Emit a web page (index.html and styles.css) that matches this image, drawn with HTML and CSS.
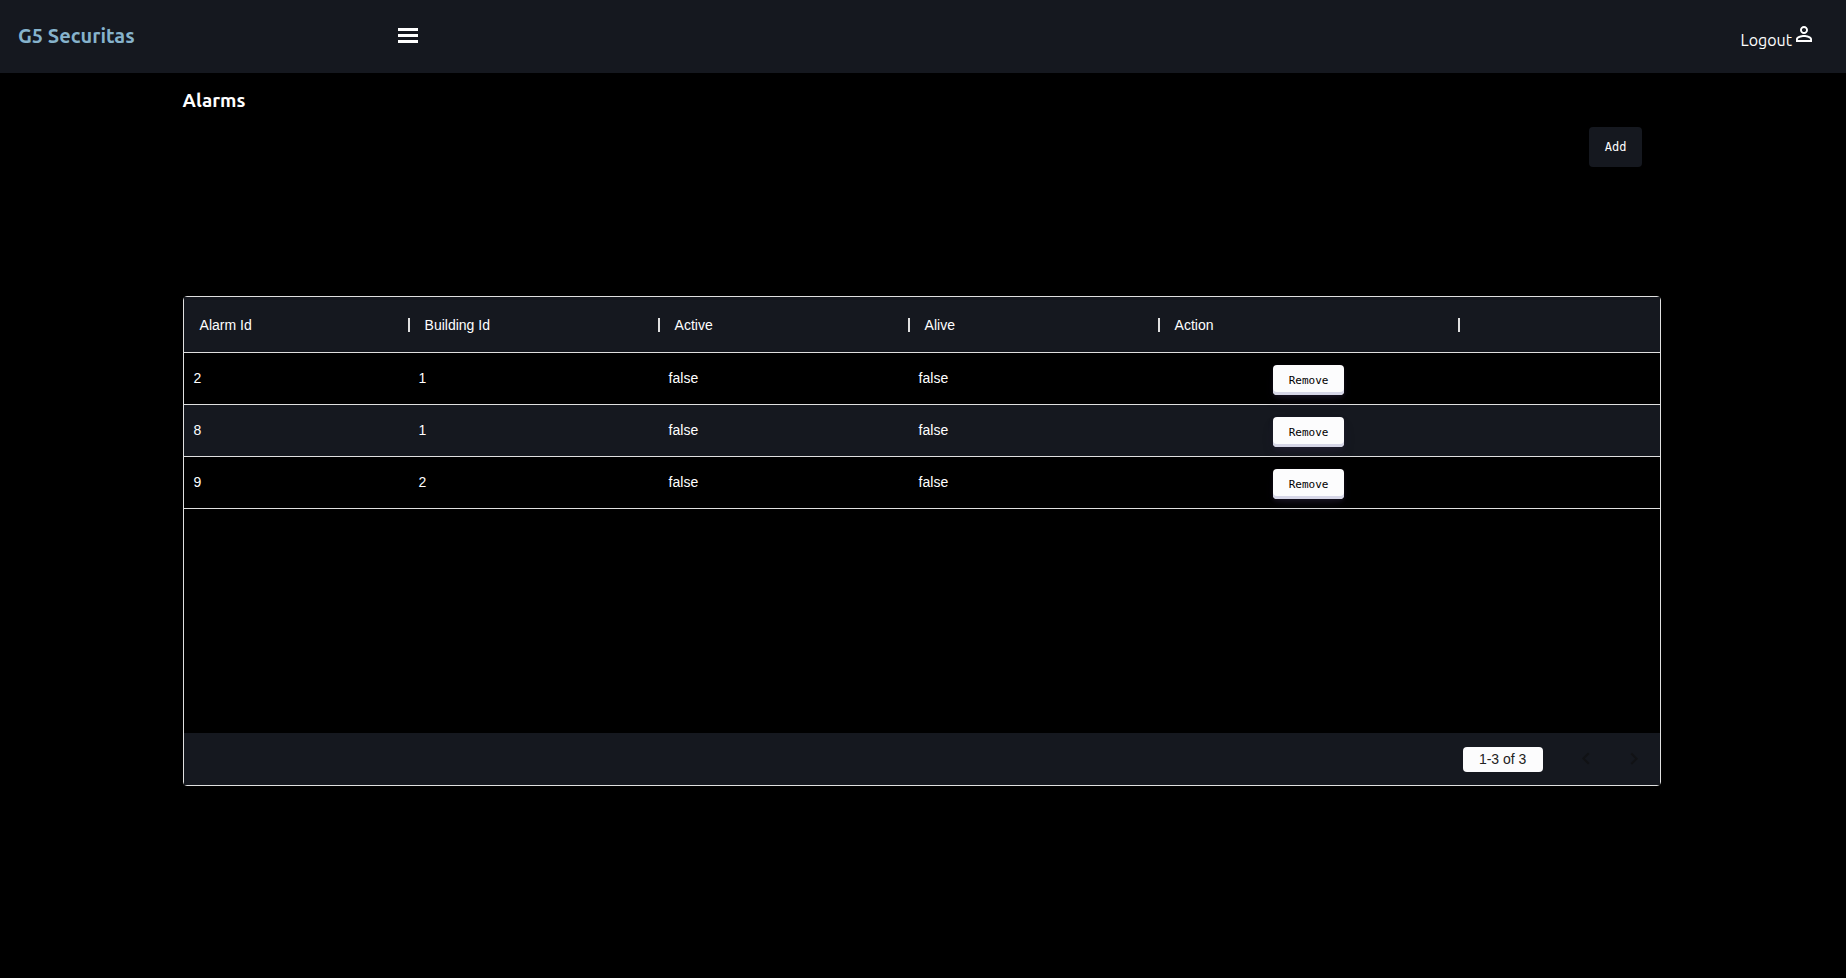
FILE: index.html
```html
<!DOCTYPE html>
<html lang="en">
<head>
<meta charset="utf-8">
<title>G5 Securitas</title>
<link rel="stylesheet" href="styles.css">
</head>
<body>
<header class="topbar">
  <div class="topbar-start">
    <a class="brand" href="#">G5 Securitas</a>
    <button class="menu-button" type="button" aria-label="Menu">
      <svg width="20" height="15" viewBox="0 0 20 15" fill="currentColor"><path d="M0 0h20v3H0zM0 6h20v3H0zM0 12h20v3H0z"/></svg>
    </button>
  </div>
  <a class="logout" href="#"><span>Logout</span>
    <svg class="logout-icon" width="24" height="24" viewBox="0 0 24 24" fill="currentColor"><path d="M12 5.9c1.16 0 2.1.94 2.1 2.1s-.94 2.1-2.1 2.1S9.900 9.160 9.900 8s.94-2.1 2.100-2.100m0 9c2.970 0 6.100 1.460 6.100 2.100v1.100H5.900V17c0-.64 3.130-2.100 6.100-2.100M12 4C9.790 4 8 5.790 8 8s1.790 4 4 4 4-1.790 4-4-1.790-4-4-4m0 9c-2.670 0-8 1.340-8 4v3h16v-3c0-2.660-5.330-4-8-4"/></svg>
  </a>
</header>
<main class="page">
  <h1 class="page-title">Alarms</h1>
  <div class="actions"><button class="add-button" type="button">Add</button></div>
  <section class="grid" aria-label="Alarms">
    <div class="grid-body">
      <table class="alarms">
        <colgroup><col class="col-id"><col class="col-data"><col class="col-data"><col class="col-data"><col class="col-action"><col></colgroup>
        <thead>
          <tr><th>Alarm Id</th><th>Building Id</th><th>Active</th><th>Alive</th><th>Action</th><td class="filler"></td></tr>
        </thead>
        <tbody>
          <tr><td>2</td><td>1</td><td>false</td><td>false</td><td class="action-cell"><button class="remove-button" type="button">Remove</button></td><td></td></tr>
          <tr><td>8</td><td>1</td><td>false</td><td>false</td><td class="action-cell"><button class="remove-button" type="button">Remove</button></td><td></td></tr>
          <tr><td>9</td><td>2</td><td>false</td><td>false</td><td class="action-cell"><button class="remove-button" type="button">Remove</button></td><td></td></tr>
        </tbody>
      </table>
    </div>
    <footer class="grid-footer">
      <p class="range">1-3 of 3</p>
      <div class="pager">
        <button class="page-button" type="button" disabled aria-label="Previous page"><svg width="24" height="24" viewBox="0 0 24 24" fill="currentColor"><path d="M15.41 16.09l-4.580-4.590 4.580-4.590L14 5.500l-6 6 6 6z"/></svg></button>
        <button class="page-button" type="button" disabled aria-label="Next page"><svg width="24" height="24" viewBox="0 0 24 24" fill="currentColor"><path d="M8.590 16.340l4.580-4.590-4.580-4.590L10 5.750l6 6-6 6z"/></svg></button>
      </div>
    </footer>
  </section>
</main>
</body>
</html>
```
FILE: styles.css
```css
* {
  box-sizing: border-box;
}

body {
  margin: 0;
  background: #000;
  color: #fff;
  font-family: "Ubuntu", "Noto Sans", sans-serif;
}

.topbar {
  display: flex;
  align-items: center;
  justify-content: space-between;
  height: 73px;
  padding: 0 30px 0 18px;
  background: #15181f;
}

.topbar-start {
  display: flex;
  align-items: center;
  padding-bottom: 2px;
}

.brand {
  width: 380px;
  color: #86b3cc;
  font-size: 20px;
  font-weight: 700;
  line-height: 24px;
  text-decoration: none;
}

.menu-button {
  display: flex;
  padding: 0;
  border: 0;
  background: none;
  color: #fff;
}

.logout {
  display: flex;
  align-items: flex-start;
  color: #fff;
  font-size: 16px;
  line-height: 24px;
  text-decoration: none;
}

.logout span {
  padding-top: 6px;
}

.page {
  width: calc(80% + 2px);
  margin-left: calc(10% - 2px);
  padding-top: 15px;
}

.page-title {
  margin: 0;
  font-size: 19px;
  font-weight: 700;
  line-height: 24px;
}

.actions {
  display: flex;
  justify-content: flex-end;
  padding: 15px 19px 129px 0;
}

.add-button {
  height: 40px;
  padding: 0 16px;
  border: 0;
  border-radius: 4px;
  background: #15181f;
  color: #fcfcfd;
  font: 12px "DejaVu Sans Mono", monospace;
}

.grid {
  display: flex;
  flex-direction: column;
  min-height: 490px;
  border: 1px solid #e0e0e0;
  border-radius: 4px;
  font-family: "Liberation Sans", Arial, sans-serif;
  font-size: 14px;
  line-height: 20px;
}

.grid-body {
  flex: 1;
}

.alarms {
  width: 100%;
  border-spacing: 0;
  table-layout: fixed;
}

.col-id {
  width: 225px;
}

.col-data {
  width: 250px;
}

.col-action {
  width: 300px;
}

.alarms th,
.alarms td {
  height: 52px;
  padding: 0 10px 2px;
  border-bottom: 1px solid #e0e0e0;
  text-align: left;
}

.alarms th,
.alarms .filler {
  position: relative;
  height: 56px;
  padding: 0 16px;
  background: #15181f;
  font-weight: 400;
}

.alarms th::after {
  position: absolute;
  top: 21px;
  right: -1px;
  z-index: 1;
  width: 2px;
  height: 14px;
  background: #e0e0e0;
  content: "";
}

.alarms tbody tr:nth-child(even) {
  background: #15181f;
}

.alarms .action-cell {
  padding-top: 3px;
  padding-bottom: 0;
  text-align: center;
}

.remove-button {
  height: 30px;
  padding: 0 16px;
  border: 0;
  border-radius: 4px;
  background: #fcfcfd;
  box-shadow: rgba(45, 35, 66, 0.4) 0 2px 4px, rgba(45, 35, 66, 0.3) 0 7px 13px -3px, #d6d6e7 0 -3px 0 inset;
  color: #000;
  font: 11px "DejaVu Sans Mono", monospace;
  vertical-align: middle;
}

.grid-footer {
  display: flex;
  align-items: center;
  justify-content: flex-end;
  min-height: 52px;
  padding-right: 2px;
  background: #15181f;
}

.range {
  margin: 0;
  padding: 2px 17px 3px 16px;
  border-radius: 4px;
  background: #fcfcfd;
  color: #222;
}

.pager {
  display: flex;
  margin-left: 19px;
}

.page-button {
  display: flex;
  padding: 12px;
  border: 0;
  background: none;
  color: #111215;
}
```
